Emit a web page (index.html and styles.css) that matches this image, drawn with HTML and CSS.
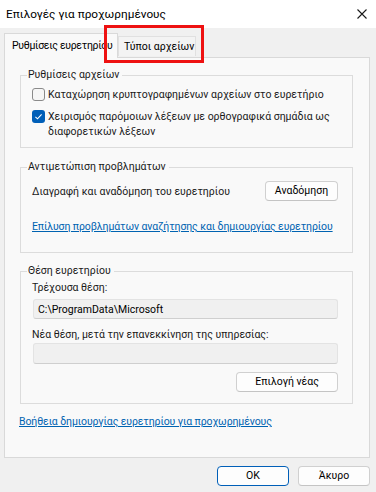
FILE: index.html
```html
<!DOCTYPE html>
<html lang="el">
<head>
    <meta charset="UTF-8">
    <meta name="viewport" content="width=device-width, initial-scale=1.0">
    <title>Επιλογές για προχωρημένους</title>
    <link rel="stylesheet" href="styles.css">
</head>
<body>
    <div class="dialog">
        <div class="titlebar">
            <span class="title">Επιλογές για προχωρημένους</span>
            <svg class="close" width="10" height="10" viewBox="0 0 10 10">
                <path d="M0.5 0.5 L9.5 9.5 M9.5 0.5 L0.5 9.5" stroke="#1a1a1a" stroke-width="1.1" fill="none"/>
            </svg>
        </div>

        <div class="tabs">
            <div class="tab active">Ρυθμίσεις ευρετηρίου</div>
            <div class="tab">Τύποι αρχείων</div>
            <div class="highlight"></div>
        </div>

        <div class="panel">
            <fieldset class="group files">
                <legend>Ρυθμίσεις αρχείων</legend>
                <label class="check first">
                    <span class="box"></span>
                    <span>Καταχώρηση κρυπτογραφημένων αρχείων στο ευρετήριο</span>
                </label>
                <label class="check second">
                    <span class="box checked">
                        <svg width="13" height="13" viewBox="0 0 13 13">
                            <path d="M3.4 6.8 L5.5 8.8 L9.6 4.4" stroke="#fff" stroke-width="1.1" fill="none"/>
                        </svg>
                    </span>
                    <span>Χειρισμός παρόμοιων λέξεων με ορθογραφικά σημάδια ως<br>διαφορετικών λέξεων</span>
                </label>
            </fieldset>

            <fieldset class="group trouble">
                <legend>Αντιμετώπιση προβλημάτων</legend>
                <div class="row">
                    <span>Διαγραφή και αναδόμηση του ευρετηρίου</span>
                    <button class="btn rebuild">Αναδόμηση</button>
                </div>
                <a class="link trouble-link" href="#">Επίλυση προβλημάτων αναζήτησης και δημιουργίας ευρετηρίου</a>
            </fieldset>

            <fieldset class="group location">
                <legend>Θέση ευρετηρίου</legend>
                <div class="label">Τρέχουσα θέση:</div>
                <div class="field">C:\ProgramData\Microsoft</div>
                <div class="label second-label">Νέα θέση, μετά την επανεκκίνηση της υπηρεσίας:</div>
                <div class="field empty"></div>
                <div class="select-row">
                    <button class="btn select">Επιλογή νέας</button>
                </div>
            </fieldset>

            <a class="link help-link" href="#">Βοήθεια δημιουργίας ευρετηρίου για προχωρημένους</a>
        </div>

        <div class="footer">
            <button class="btn ok">OK</button>
            <button class="btn cancel">Άκυρο</button>
        </div>
    </div>
</body>
</html>
```

FILE: styles.css
```css
body {
    margin: 0;
    width: 376px;
    height: 492px;
    overflow: hidden;
    background-color: #f0f0f0;
    font-family: 'Roboto', 'Noto Sans', sans-serif;
    font-size: 10.5px;
    line-height: 16px;
    color: #1a1a1a;
    white-space: nowrap;
}
.dialog {
    display: flex;
    flex-direction: column;
    height: 492px;
}
.titlebar {
    height: 28px;
    background-color: #fff;
    display: flex;
    align-items: center;
    justify-content: space-between;
    padding: 0 9px 0 6px;
}
.title {
    font-size: 11.8px;
    color: #000;
}
.close {
    margin-top: -1px;
}
.tabs {
    position: relative;
    display: flex;
    align-items: flex-end;
    height: 29px;
    padding-left: 4px;
}
.tab {
    height: 20px;
    line-height: 19px;
    width: 78px;
    padding-left: 5px;
    box-sizing: border-box;
    border: 1px solid #e0e0e0;
    border-bottom: none;
    background-color: #f3f3f3;
    margin-bottom: 1px;
    color: #000;
}
.tab.active {
    position: relative;
    z-index: 1;
    height: 25px;
    line-height: 24px;
    width: 114px;
    padding-left: 7px;
    letter-spacing: -0.3px;
    background-color: #f9f9f9;
    border-color: #d9d9d9;
    margin-bottom: -1px;
}
.highlight {
    position: absolute;
    left: 104px;
    top: -3px;
    width: 94px;
    height: 32px;
    border: 3px solid #ee1111;
    z-index: 2;
}
.panel {
    margin: 0 6px 0 4px;
    height: 401px;
    box-sizing: border-box;
    border: 1px solid #d9d9d9;
    background-color: #f9f9f9;
    padding: 9px 16px 0 14px;
}
.group {
    margin: 0 0 10px 1px;
    padding: 0 14px 0 11px;
    border: 1px solid #dcdcdc;
    line-height: 15px;
}
.group.files {
    margin-bottom: 11px;
}
.group legend {
    padding: 0 3px 0 1px;
    margin-left: -5px;
    line-height: 16px;
}
.check {
    display: flex;
    align-items: flex-start;
}
.check.first {
    margin-top: 4px;
}
.check.second {
    margin-top: 7px;
    margin-bottom: 8px;
}
.box {
    flex: none;
    width: 11px;
    height: 11px;
    margin: 1px 3px 0 0;
    border: 1px solid #8a8a8a;
    border-radius: 3px;
    background-color: #f6f6f6;
}
.box.checked {
    width: 13px;
    height: 13px;
    border: none;
    background-color: #005fb8;
}
.box svg {
    display: block;
}
.row {
    display: flex;
    justify-content: space-between;
    align-items: center;
    margin-top: 6px;
}
.btn {
    font-family: inherit;
    font-size: 10.5px;
    line-height: 16px;
    color: #000;
    height: 20px;
    padding: 0;
    box-sizing: border-box;
    border: 1px solid #d0d0d0;
    border-bottom-color: #c4c4c4;
    border-radius: 4px;
    background-color: #fdfdfd;
}
.rebuild {
    width: 73px;
}
.link {
    display: block;
    color: #0063b1;
    text-decoration: underline;
    letter-spacing: -0.1px;
}
.trouble-link {
    margin: 18px 0 18px;
}
.label {
    margin-top: 1px;
}
.second-label {
    margin-top: 8px;
}
.field {
    height: 20px;
    line-height: 19px;
    margin: 4px 0 0 1px;
    padding-left: 4px;
    box-sizing: border-box;
    border: 1px solid #e3e3e3;
    border-bottom-color: #cfcfcf;
    border-radius: 3px;
    background-color: #f0f0f0;
    color: #000;
}
.field.empty {
    height: 21px;
    margin-top: 1px;
}
.select-row {
    display: flex;
    justify-content: flex-end;
    margin: 8px 0 11px;
}
.select {
    width: 102px;
}
.help-link {
    margin-top: 10px;
}
.footer {
    display: flex;
    justify-content: flex-end;
    gap: 9px;
    padding: 8px 6px 0 0;
}
.ok, .cancel {
    width: 72px;
}
.ok {
    border: 1px solid #005fb8;
}
```
